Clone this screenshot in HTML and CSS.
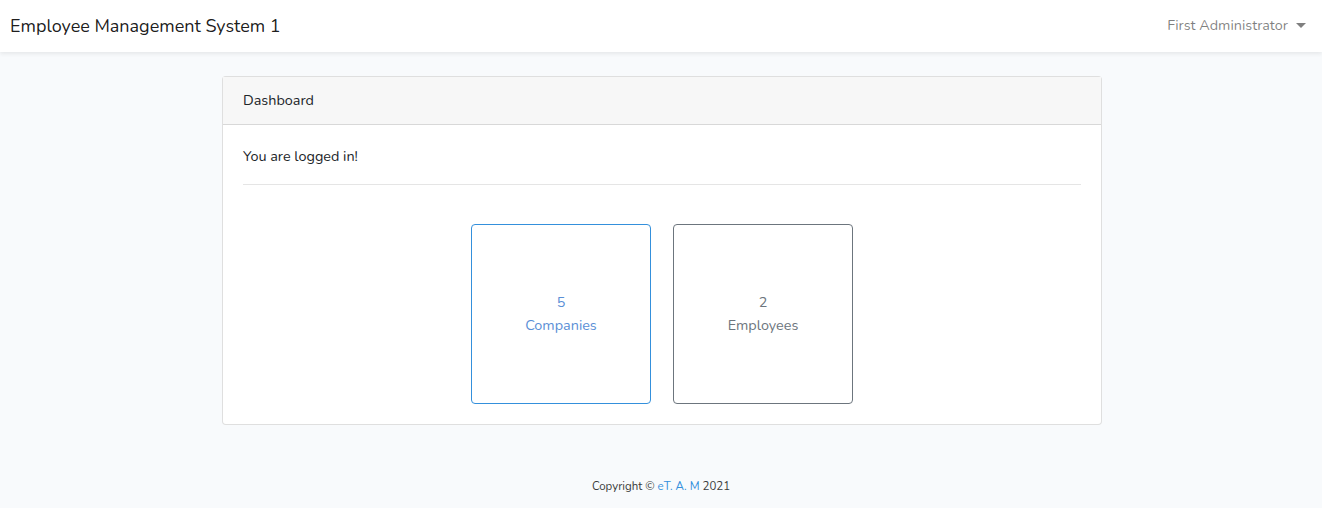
FILE: index.html
```html
<!DOCTYPE html>
<html lang="en">
<head>
<meta charset="utf-8">
<title>Employee Management System 1</title>
<link rel="stylesheet" href="styles.css">
</head>
<body>
<nav class="navbar">
  <a class="brand" href="#">Employee Management System 1</a>
  <a class="user" href="#">First Administrator <span class="caret"></span></a>
</nav>
<main class="main">
  <div class="card">
    <div class="card-header">Dashboard</div>
    <div class="card-body">
      <p class="status">You are logged in!</p>
      <hr class="divider">
      <div class="tiles">
        <a class="tile tile-primary" href="#"><span>5</span><span>Companies</span></a>
        <a class="tile tile-secondary" href="#"><span>2</span><span>Employees</span></a>
      </div>
    </div>
  </div>
</main>
<footer class="footer">Copyright © <a href="#">eT. A. M</a> 2021</footer>
</body>
</html>
```
FILE: styles.css
```css
* { box-sizing: border-box; }
html, body { margin: 0; padding: 0; }
body {
  background: #f8fafc;
  font-family: "Nunito", "Lato", "Open Sans", sans-serif;
  font-size: 14.4px;
  line-height: 1.6;
  color: #212529;
}
a { text-decoration: none; }
.navbar {
  height: 52px;
  background: #fff;
  box-shadow: 0 2px 4px rgba(0,0,0,0.075);
  display: flex;
  align-items: center;
  justify-content: space-between;
  padding: 0 16px 0 10px;
}
.brand {
  font-size: 18px;
  color: rgba(0,0,0,0.9);
}
.user {
  color: rgba(0,0,0,0.5);
  font-size: 14.4px;
  display: flex;
  align-items: center;
}
.caret {
  display: inline-block;
  margin-left: 8px;
  border-top: 5px solid rgba(0,0,0,0.5);
  border-left: 5px solid transparent;
  border-right: 5px solid transparent;
}
.main { padding: 24px 0 24px 2px; }
.card {
  width: 880px;
  margin: 0 auto;
  background: #fff;
  border: 1px solid rgba(0,0,0,0.125);
  border-radius: 4px;
}
.card-header {
  background: #f7f7f7;
  border-bottom: 1px solid rgba(0,0,0,0.125);
  padding: 12px 20px;
  height: 48px;
  line-height: 23px;
}
.card-body { padding: 20px; }
.status { margin: 0; line-height: 23px; }
.divider {
  border: 0;
  border-top: 1px solid rgba(0,0,0,0.1);
  margin: 16px 0 39px;
}
.tiles {
  display: flex;
  justify-content: center;
  gap: 22px;
}
.tile {
  width: 180px;
  height: 180px;
  border: 1px solid;
  border-radius: 4px;
  display: flex;
  flex-direction: column;
  align-items: center;
  justify-content: center;
  line-height: 23px;
}
.tile-primary { border-color: #3490dc; color: #5a8fd6; }
.tile-secondary { border-color: #6c757d; color: #6c757d; }
.footer {
  text-align: center;
  font-size: 11.5px;
  color: #3a3a3a;
  padding-top: 28px;
}
.footer a { color: #3490dc; }
```
